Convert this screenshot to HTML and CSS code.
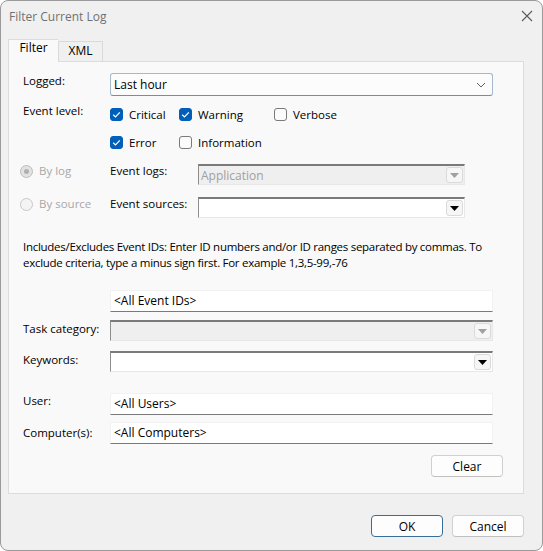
FILE: index.html
```html
<!DOCTYPE html>
<html>
<head>
<meta charset="utf-8">
<link rel="stylesheet" href="styles.css">
</head>
<body>
<div class="window">
  <div class="titlebar">
    <span class="title">Filter Current Log</span>
    <svg class="close" width="12" height="12" viewBox="0 0 12 12"><path d="M1 1 L11 11 M11 1 L1 11" stroke="#5a5a5a" stroke-width="1.1" fill="none"/></svg>
  </div>
  <div class="tabs">
    <div class="tab active">Filter</div>
    <div class="tab">XML</div>
  </div>
  <div class="panel">
    <div class="row row-logged">
      <div class="label">Logged:</div>
      <div class="select">
        <span>Last hour</span>
        <svg width="10" height="6" viewBox="0 0 10 6"><path d="M1 1 L5 5 L9 1" stroke="#606060" stroke-width="1" fill="none"/></svg>
      </div>
    </div>
    <div class="row row-level1">
      <div class="label">Event level:</div>
      <div class="checks">
        <label class="check w-crit"><span class="box on"><svg width="13" height="13" viewBox="0 0 13 13"><path d="M3.2 6.8 L5.5 9 L9.8 4.3" stroke="#fff" stroke-width="1.2" fill="none"/></svg></span>Critical</label>
        <label class="check w-warn"><span class="box on"><svg width="13" height="13" viewBox="0 0 13 13"><path d="M3.2 6.8 L5.5 9 L9.8 4.3" stroke="#fff" stroke-width="1.2" fill="none"/></svg></span>Warning</label>
        <label class="check"><span class="box"></span>Verbose</label>
      </div>
    </div>
    <div class="row row-level2">
      <div class="label"></div>
      <div class="checks">
        <label class="check w-crit"><span class="box on"><svg width="13" height="13" viewBox="0 0 13 13"><path d="M3.2 6.8 L5.5 9 L9.8 4.3" stroke="#fff" stroke-width="1.2" fill="none"/></svg></span>Error</label>
        <label class="check"><span class="box"></span>Information</label>
      </div>
    </div>
    <div class="src-row row-bylog">
      <div class="radio-item"><span class="radio on"></span>By log</div>
      <div class="label dark">Event logs:</div>
      <div class="combo disabled"><span>Application</span><span class="dd-btn"><svg width="9" height="5" viewBox="0 0 9 5"><path d="M0 0 L9 0 L4.5 5 Z" fill="#a0a0a0"/></svg></span></div>
    </div>
    <div class="src-row row-bysrc">
      <div class="radio-item"><span class="radio"></span>By source</div>
      <div class="label dark">Event sources:</div>
      <div class="combo"><span></span><span class="dd-btn"><svg width="9" height="5" viewBox="0 0 9 5"><path d="M0 0 L9 0 L4.5 5 Z" fill="#000"/></svg></span></div>
    </div>
    <p class="desc">Includes/Excludes Event IDs: Enter ID numbers and/or ID ranges separated by commas. To exclude criteria, type a minus sign first. For example 1,3,5-99,-76</p>
    <div class="row row-ids">
      <div class="label"></div>
      <div class="field">&lt;All Event IDs&gt;</div>
    </div>
    <div class="row row-task">
      <div class="label">Task category:</div>
      <div class="combo disabled wide"><span></span><span class="dd-btn"><svg width="9" height="5" viewBox="0 0 9 5"><path d="M0 0 L9 0 L4.5 5 Z" fill="#a0a0a0"/></svg></span></div>
    </div>
    <div class="row row-kw">
      <div class="label">Keywords:</div>
      <div class="combo wide"><span></span><span class="dd-btn"><svg width="9" height="5" viewBox="0 0 9 5"><path d="M0 0 L9 0 L4.5 5 Z" fill="#000"/></svg></span></div>
    </div>
    <div class="row row-user">
      <div class="label">User:</div>
      <div class="field">&lt;All Users&gt;</div>
    </div>
    <div class="row row-comp">
      <div class="label">Computer(s):</div>
      <div class="field">&lt;All Computers&gt;</div>
    </div>
    <div class="clear-row">
      <button class="btn">Clear</button>
    </div>
  </div>
  <div class="footer">
    <button class="btn primary">OK</button>
    <button class="btn">Cancel</button>
  </div>
</div>
</body>
</html>
```
FILE: styles.css
```css
* { box-sizing: border-box; }
html, body { margin: 0; padding: 0; background: #ffffff; }
body {
  font-family: "Open Sans", "Noto Sans", sans-serif;
  font-size: 11.5px;
  color: #000;
}
.window {
  width: 543px;
  height: 551px;
  background: #f0f0f0;
  border: 1px solid #9a9a9a;
  border-radius: 8px;
  position: relative;
  overflow: hidden;
}
.titlebar {
  height: 31px;
  display: flex;
  align-items: center;
  justify-content: space-between;
  padding: 0 9px 0 8px;
}
.title { color: #707070; font-size: 12px; }
.close { margin-top: -1px; }
.tabs {
  display: flex;
  align-items: flex-end;
  padding-left: 7px;
  height: 29px;
  position: relative;
  z-index: 1;
}
.tab {
  height: 20px;
  border: 1px solid #d9d9d9;
  border-bottom: none;
  background: #f0f0f0;
  width: 45px;
  text-align: center;
  line-height: 18px;
  font-size: 12px;
}
.tab.active {
  height: 23px;
  width: 50px;
  background: #f9f9f9;
  border-color: #dcdcdc;
  margin-bottom: -1px;
  line-height: 16px;
  border-right: none;
}
.panel {
  margin: 0 18px 0 7px;
  height: 433px;
  background: #f9f9f9;
  border: 1px solid #dcdcdc;
  padding: 0 30px 0 14px;
}
.row {
  display: grid;
  grid-template-columns: 87px 1fr;
  align-items: start;
}
.label { line-height: 16px; white-space: nowrap; }
.row-logged { margin-top: 11px; }
.select {
  height: 23px;
  border: 1px solid #a6b8cc;
  border-bottom-color: #6e8fb3;
  border-radius: 3px;
  background: #fcfcfc;
  display: flex;
  align-items: center;
  justify-content: space-between;
  padding: 0 6px 0 3px;
  font-size: 12px;
}
.row-level1 { margin-top: 7px; height: 22px; }
.row-level2 { margin-top: 6px; height: 22px; }
.row-level2 .label { height: 1px; }
.checks { display: flex; align-items: center; height: 22px; }
.check { display: flex; align-items: center; width: 165px; }
.check.w-crit { width: 69px; }
.check.w-warn { width: 95px; }
.box {
  width: 13px; height: 13px;
  border: 1px solid #7a7a7a;
  border-radius: 3px;
  background: #fbfbfb;
  margin-right: 6px;
  display: inline-flex;
  flex: none;
}
.box.on { background: #005fb8; border-color: #005fb8; }
.box.on svg { margin: -1px; }
.src-row {
  display: grid;
  grid-template-columns: 90px 88px 267px;
  margin-left: -3px;
  align-items: start;
}
.row-bylog { margin-top: 10px; }
.row-bysrc { margin-top: 11px; }
.radio-item { display: flex; align-items: center; color: #a8a8a8; line-height: 16px; }
.radio {
  width: 13px; height: 13px; border-radius: 50%;
  border: 1px solid #c8c8c8; background: #f4f4f4; margin-right: 6px;
  position: relative;
}
.radio.on { border-color: #bdbdbd; background: #e2e2e2; }
.radio.on::after {
  content: ""; position: absolute; left: 3px; top: 3px; width: 5px; height: 5px; border-radius: 50%; background: #b0b0b0;
}
.combo {
  height: 21px;
  border-top: 2px solid #7a7a7a;
  border-left: 1px solid #8e8e8e;
  border-right: 1px solid #e8e8e8;
  border-bottom: 1px solid #e8e8e8;
  background: #ffffff;
  display: flex;
  align-items: center;
  justify-content: space-between;
  padding: 0 1px 0 2px;
  margin-top: 1px;
  font-size: 12px;
}
.combo.disabled { background: #efefef; color: #a0a0a0; }
.dd-btn {
  width: 17px; height: 16px;
  border: 1px solid #dadada;
  border-radius: 3px;
  background: #f6f6f6;
  display: flex; align-items: center; justify-content: center;
}
.desc {
  margin: 21px -2px 0 0;
  line-height: 16px;
  font-size: 11.5px;
  letter-spacing: -0.28px;
}
.field {
  height: 22px;
  background: #fff;
  border: 1px solid #f2f2f2;
  border-bottom: 1px solid #7a7a7a;
  padding-left: 3px;
  line-height: 20px;
  font-size: 12px;
}
.row-ids { margin-top: 19px; }
.row-task { margin-top: 7px; }
.row-task .label, .row-kw .label { padding-top: 2px; }
.row-kw { margin-top: 9px; }
.row-user { margin-top: 21px; }
.row-comp { margin-top: 7px; }
.row-comp .label { padding-top: 3px; }
.clear-row { display: flex; justify-content: flex-end; margin-top: 11px; margin-right: -10px; }
.btn {
  font-family: inherit;
  font-size: 12px;
  width: 72px;
  height: 22px;
  background: #fdfdfd;
  border: 1px solid #d0d0d0;
  border-bottom-color: #c0c0c0;
  border-radius: 4px;
  padding: 0;
  color: #000;
}
.footer {
  display: flex;
  justify-content: flex-end;
  gap: 9px;
  padding: 21px 18px 0 0;
}
.btn.primary { border-color: #3a6d96; }
```
